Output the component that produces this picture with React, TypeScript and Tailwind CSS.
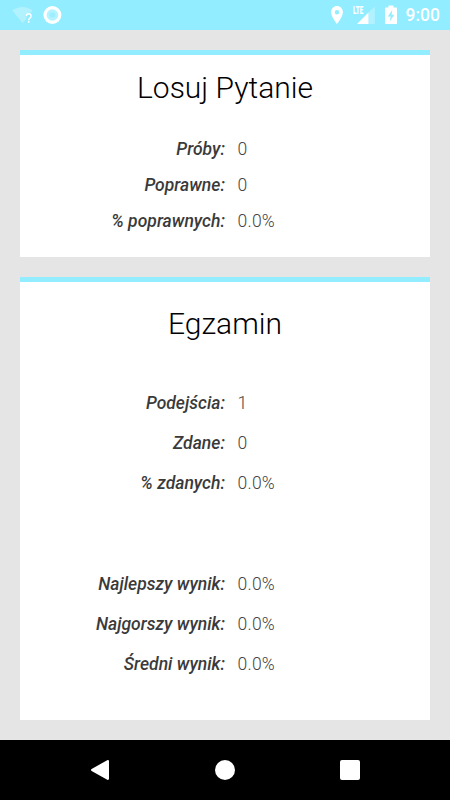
type Stat = { label: string; value: string };

const drawStats: Stat[] = [
  { label: "Próby:", value: "0" },
  { label: "Poprawne:", value: "0" },
  { label: "% poprawnych:", value: "0.0%" },
];

const examStats: Stat[] = [
  { label: "Podejścia:", value: "1" },
  { label: "Zdane:", value: "0" },
  { label: "% zdanych:", value: "0.0%" },
];

const scoreStats: Stat[] = [
  { label: "Najlepszy wynik:", value: "0.0%" },
  { label: "Najgorszy wynik:", value: "0.0%" },
  { label: "Średni wynik:", value: "0.0%" },
];

function StatRow({ label, value }: Stat) {
  return (
    <div className="grid grid-cols-2 items-center text-[17.5px] leading-5">
      <div className="text-right font-medium italic tracking-[0.02px] text-[#3a3a3a]">{label}</div>
      <div className="pl-[12.5px] font-light tracking-[0.25px] text-[#444]">{value}</div>
    </div>
  );
}

function StatusBar() {
  return (
    <header className="flex h-[30px] shrink-0 items-center justify-between bg-[#91edff] text-white">
      <div className="flex h-full items-center pl-[12px]">
        <svg className="h-[30px] w-[24px]" viewBox="0 0 24 30" fill="none">
          <path d="M.3 10.500C6 5.700 15 5.700 20.700 10.500L19 12.700c-3-1-6 1-6 4h1.500v2L10.500 23z" fill="#fff" fillOpacity=".3" />
          <path d="M14.300 16.200c0-3.200 4.800-3.200 4.800 0 0 1.900-2.400 1.900-2.400 4M16.700 21v1.800" stroke="#fff" strokeWidth="1.400" />
        </svg>
        <svg className="ml-[7px] h-[30px] w-[19px]" viewBox="0 0 19 30">
          <circle cx="9.400" cy="15" r="9" fill="#fff" />
          <circle cx="9.400" cy="15" r="5.800" fill="#b4f3ff" />
          <circle cx="9.400" cy="15" r="2.800" fill="#9deeff" />
        </svg>
      </div>
      <div className="flex h-full items-center pr-[10px]">
        <svg className="h-[30px] w-[13px]" viewBox="0 0 13 30">
          <path d="M6 6C2.700 6 .1 8.700.1 12.200c0 4.600 5.900 11.800 5.900 11.800s5.900-7.200 5.900-11.800C11.900 8.700 9.300 6 6 6zm0 8.500a2.200 2.200 0 110-4.400 2.200 2.200 0 010 4.400z" fill="#fff" />
        </svg>
        <div className="relative ml-[8px] h-[30px] w-[24px]">
          <span className="absolute left-px top-[5px] origin-left scale-x-[.62] text-[10px] font-black leading-[11px]">LTE</span>
          <svg className="h-[30px] w-[24px]" viewBox="0 0 24 30" fill="#fff">
            <path d="M16.500 12.500L22.800 6.500V24h-6.300z" fillOpacity=".3" />
            <path d="M16.500 12.500V24H5z" />
          </svg>
        </div>
        <svg className="ml-[9px] h-[30px] w-[12px]" viewBox="0 0 12 30">
          <path d="M3.500 5.500h5v2H11c.6 0 1 .4 1 1V23c0 .6-.4 1-1 1H1c-.6 0-1-.4-1-1V8.500c0-.6.4-1 1-1h2.500z" fill="#fff" />
          <path d="M7.300 10L2.800 16.500h2.900L4.700 21.500 9.300 14.800H6.600z" fill="#91edff" />
        </svg>
        <span className="ml-[9px] text-[17.500px] font-medium leading-[31px]">9:00</span>
      </div>
    </header>
  );
}

function NavBar() {
  return (
    <nav className="flex h-[60px] shrink-0 items-center justify-between bg-black px-[90px]">
      <svg className="h-5 w-5" viewBox="0 0 20 20" fill="#fff">
        <path d="M17.800 0c.7 0 1.200.500 1.200 1.200v17.600c0 .9-.9 1.500-1.700 1L1.600 11c-.8-.5-.8-1.500 0-2L17.200.2z" />
      </svg>
      <div className="h-5 w-5 rounded-full bg-white" />
      <div className="h-5 w-5 rounded-[2px] bg-white" />
    </nav>
  );
}

export default function App() {
  return (
    <div className="flex h-[800px] w-[450px] flex-col overflow-hidden bg-[#e5e5e5] font-['Roboto',sans-serif]">
      <StatusBar />
      <main className="flex flex-1 flex-col gap-5 p-5">
        <section className="h-[207px] border-t-[5px] border-[#91edff] bg-white">
          <h2 className="pt-[15px] text-center text-[30px] font-light leading-[35px] text-black">Losuj Pytanie</h2>
          <div className="mt-[34px] flex flex-col gap-4">
            {drawStats.map((s) => (
              <StatRow key={s.label} {...s} />
            ))}
          </div>
        </section>

        <section className="h-[443px] border-t-[5px] border-[#91edff] bg-white">
          <h2 className="pt-[24px] text-center text-[30px] font-light leading-[35px] text-black">Egzamin</h2>
          <div className="mt-[52px] flex flex-col gap-5">
            {examStats.map((s) => (
              <StatRow key={s.label} {...s} />
            ))}
          </div>
          <div className="mt-[81px] flex flex-col gap-5">
            {scoreStats.map((s) => (
              <StatRow key={s.label} {...s} />
            ))}
          </div>
        </section>
      </main>
      <NavBar />
    </div>
  );
}
